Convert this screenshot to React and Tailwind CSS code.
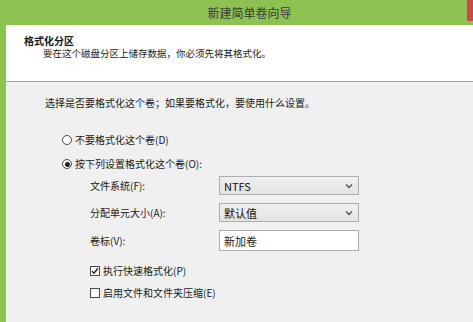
const Radio = ({ checked, label }) => (
    <div className="flex items-center h-[14px] gap-[3px]">
        <span className="w-[10px] h-[10px] rounded-full border border-[#4a4a4a] bg-white flex items-center justify-center">
            {checked && <span className="w-[5px] h-[5px] rounded-full bg-[#222]" />}
        </span>
        <span>{label}</span>
    </div>
);

const Check = ({ checked, label }) => (
    <div className="flex items-center h-[14px] gap-[3px]">
        <span className="w-[10px] h-[10px] border border-[#4a4a4a] bg-white flex items-center justify-center">
            {checked && (
                <svg width="8" height="8" viewBox="0 0 8 8">
                    <path d="M1 4.2 L3 6.3 L7 1.3" fill="none" stroke="#222" strokeWidth="1.4" />
                </svg>
            )}
        </span>
        <span>{label}</span>
    </div>
);

const Select = ({ value }) => (
    <div className="w-[140px] h-[19px] border border-[#adadad] bg-gradient-to-b from-[#f0f0f0] to-[#e3e3e3] flex items-center justify-between pl-[4px] pr-[5px] text-[11px] text-[#111]">
        <span>{value}</span>
        <svg width="8" height="6" viewBox="0 0 8 6">
            <path d="M1 1.5 L4 4.5 L7 1.5" fill="none" stroke="#555" strokeWidth="1.3" />
        </svg>
    </div>
);

export default function App() {
    return (
        <div
            className="w-[473px] h-[322px] bg-[#8dc152] flex flex-col overflow-hidden text-[10px] text-[#1a1a1a]"
            style={{ fontFamily: '"Noto Sans CJK SC", "Noto Sans", sans-serif' }}
        >
            {/* title bar */}
            <div className="relative h-[25px] flex items-center justify-center">
                <span className="text-[12px] leading-[14px] text-[#3a3a3a] ml-[26px]">新建简单卷向导</span>
                <div className="absolute right-0 top-0 w-[6px] h-[21px] bg-[#c94a4a]" />
            </div>

            <div className="flex-1 ml-[6px] flex flex-col">
                {/* header */}
                <div className="h-[57px] bg-white border-b border-[#a0a0a0] pt-[10px] leading-[12px]">
                    <div className="pl-[18px] font-bold">格式化分区</div>
                    <div className="pl-[37px] text-[9.5px]">要在这个磁盘分区上储存数据，你必须先将其格式化。</div>
                </div>

                {/* body */}
                <div className="flex-1 bg-[#f0f0f0] pl-[39px] pt-[15px] leading-[12px]">
                    <p>选择是否要格式化这个卷；如果要格式化，要使用什么设置。</p>

                    <div className="ml-[17px] mt-[24px]">
                        <Radio label="不要格式化这个卷(D)" />
                    </div>
                    <div className="ml-[17px] mt-[10px]">
                        <Radio checked label="按下列设置格式化这个卷(O):" />
                    </div>

                    <div className="ml-[45px] mt-[5px] grid grid-cols-[129px_140px] items-center gap-y-[8px]">
                        <span>文件系统(F):</span>
                        <Select value="NTFS" />
                        <span>分配单元大小(A):</span>
                        <Select value="默认值" />
                        <span>卷标(V):</span>
                        <div className="h-[21px] border border-[#abadb3] bg-white flex items-center pl-[4px] text-[11px]">新加卷</div>
                    </div>

                    <div className="ml-[45px] mt-[13px]">
                        <Check checked label="执行快速格式化(P)" />
                    </div>
                    <div className="ml-[45px] mt-[8px]">
                        <Check label="启用文件和文件夹压缩(E)" />
                    </div>
                </div>
            </div>
        </div>
    );
}
